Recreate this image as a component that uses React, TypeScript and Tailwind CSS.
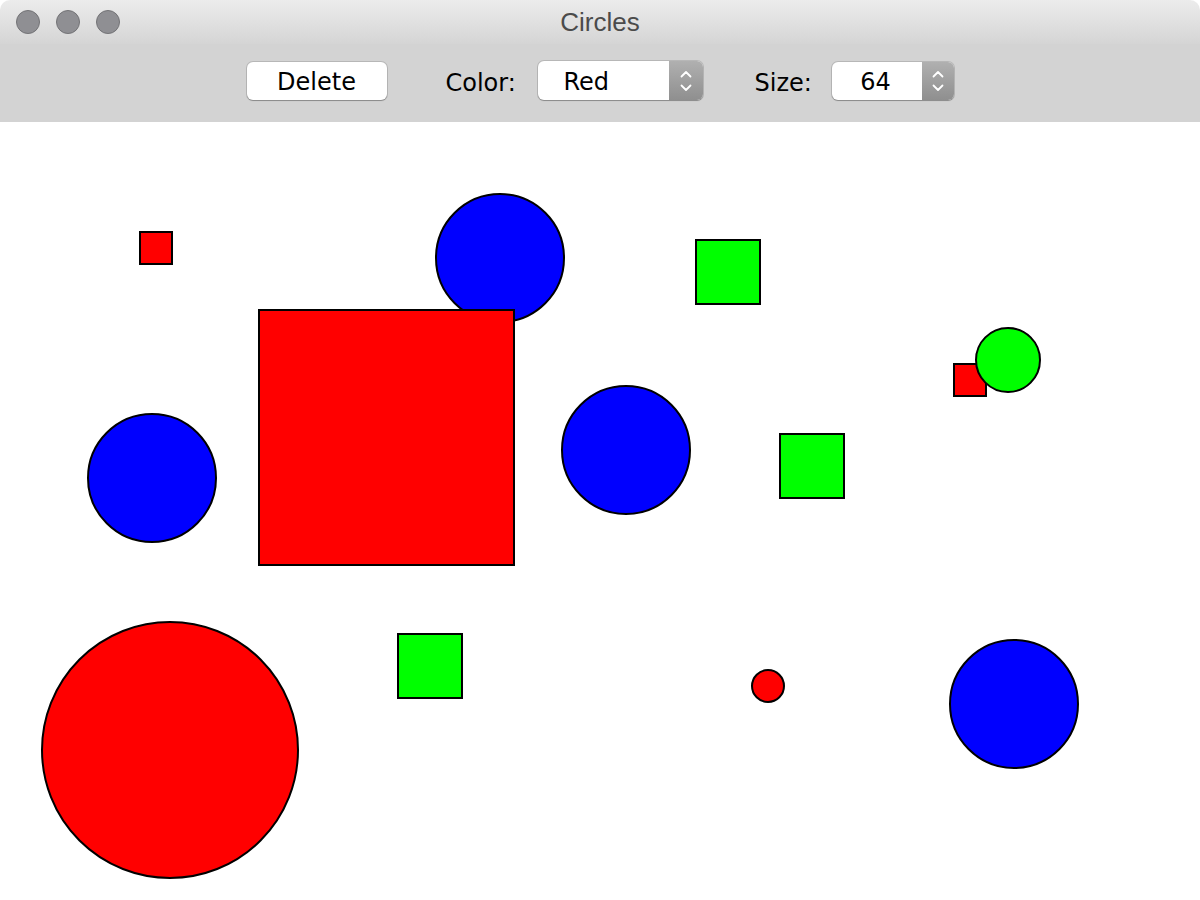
type Shape =
  | { kind: 'rect'; x: number; y: number; s: number; fill: string }
  | { kind: 'circle'; cx: number; cy: number; r: number; fill: string }

const RED = '#ff0000'
const BLUE = '#0000ff'
const GREEN = '#00ff00'

// drawn in order, later ones sit on top
const shapes: Shape[] = [
  { kind: 'circle', cx: 500, cy: 258, r: 64, fill: BLUE },
  { kind: 'rect', x: 140, y: 232, s: 32, fill: RED },
  { kind: 'rect', x: 259, y: 310, s: 255, fill: RED },
  { kind: 'rect', x: 696, y: 240, s: 64, fill: GREEN },
  { kind: 'rect', x: 954, y: 364, s: 32, fill: RED },
  { kind: 'circle', cx: 1008, cy: 360, r: 32, fill: GREEN },
  { kind: 'circle', cx: 152, cy: 478, r: 64, fill: BLUE },
  { kind: 'circle', cx: 626, cy: 450, r: 64, fill: BLUE },
  { kind: 'rect', x: 780, y: 434, s: 64, fill: GREEN },
  { kind: 'circle', cx: 170, cy: 750, r: 128, fill: RED },
  { kind: 'rect', x: 398, y: 634, s: 64, fill: GREEN },
  { kind: 'circle', cx: 768, cy: 686, r: 16, fill: RED },
  { kind: 'circle', cx: 1014, cy: 704, r: 64, fill: BLUE },
]

function Stepper({ width }: { width: string }) {
  return (
    <div
      className={`flex ${width} items-center justify-center rounded-r-[6px] bg-gradient-to-b from-[#b0b0b0] to-[#8f8f8f]`}
    >
      <svg width="14" height="24" viewBox="0 0 14 24" fill="none">
        <path
          d="M2.5 7.5 L7 3 L11.5 7.5"
          stroke="white"
          strokeWidth="1.8"
          strokeLinecap="round"
          strokeLinejoin="round"
        />
        <path
          d="M2.5 16.5 L7 21 L11.5 16.5"
          stroke="white"
          strokeWidth="1.8"
          strokeLinecap="round"
          strokeLinejoin="round"
        />
      </svg>
    </div>
  )
}

export default function App() {
  return (
    <div className="flex h-[900px] w-[1200px] flex-col bg-white font-['DejaVu_Sans',sans-serif] text-black">
      {/* Title bar */}
      <div className="relative flex h-[44px] items-center justify-center rounded-t-[10px] bg-gradient-to-b from-[#ececec] to-[#d5d5d5]">
        <div className="absolute top-[10px] left-[16px] flex gap-[16px]">
          <span className="size-[24px] rounded-full border border-[#737376] bg-[#8f8f93]" />
          <span className="size-[24px] rounded-full border border-[#737376] bg-[#8f8f93]" />
          <span className="size-[24px] rounded-full border border-[#737376] bg-[#8f8f93]" />
        </div>
        <span className="font-['Liberation_Sans',sans-serif] text-[26px] text-[#4b4b4b]">
          Circles
        </span>
      </div>

      {/* Toolbar */}
      <div className="flex h-[78px] items-center justify-center bg-[#d3d3d3] pb-[5px] text-[24px]">
        <button className="flex h-[38px] w-[140px] items-center justify-center rounded-[6px] bg-white pt-[2px] shadow-[0_0_0_1px_rgba(0,0,0,0.13),0_1px_1px_rgba(0,0,0,0.25)]">
          Delete
        </button>

        <span className="ml-[57px] w-[74px] pt-[4px] pl-[2px]">Color:</span>
        <div className="ml-[20px] flex h-[39px] w-[165px] rounded-[6px] bg-white shadow-[0_0_0_1px_rgba(0,0,0,0.13),0_1px_1px_rgba(0,0,0,0.25)]">
          <span className="flex flex-1 items-center pt-[2px] pl-[26px]">Red</span>
          <Stepper width="w-[34px]" />
        </div>

        <span className="ml-[52px] w-[57px] pt-[4px]">Size:</span>
        <div className="ml-[20px] flex h-[38px] w-[122px] rounded-[6px] bg-white shadow-[0_0_0_1px_rgba(0,0,0,0.13),0_1px_1px_rgba(0,0,0,0.25)]">
          <span className="flex flex-1 items-center justify-center pt-[2px] pr-[2px]">64</span>
          <Stepper width="w-[32px]" />
        </div>
      </div>

      {/* Canvas */}
      <div className="relative flex-1 bg-white">
        <svg
          className="absolute inset-0"
          width="1200"
          height="778"
          viewBox="0 122 1200 778"
        >
          {shapes.map((s, i) =>
            s.kind === 'rect' ? (
              <rect
                key={i}
                x={s.x}
                y={s.y}
                width={s.s}
                height={s.s}
                fill={s.fill}
                stroke="black"
                strokeWidth="2"
              />
            ) : (
              <circle
                key={i}
                cx={s.cx}
                cy={s.cy}
                r={s.r}
                fill={s.fill}
                stroke="black"
                strokeWidth="2"
              />
            ),
          )}
        </svg>
      </div>
    </div>
  )
}
